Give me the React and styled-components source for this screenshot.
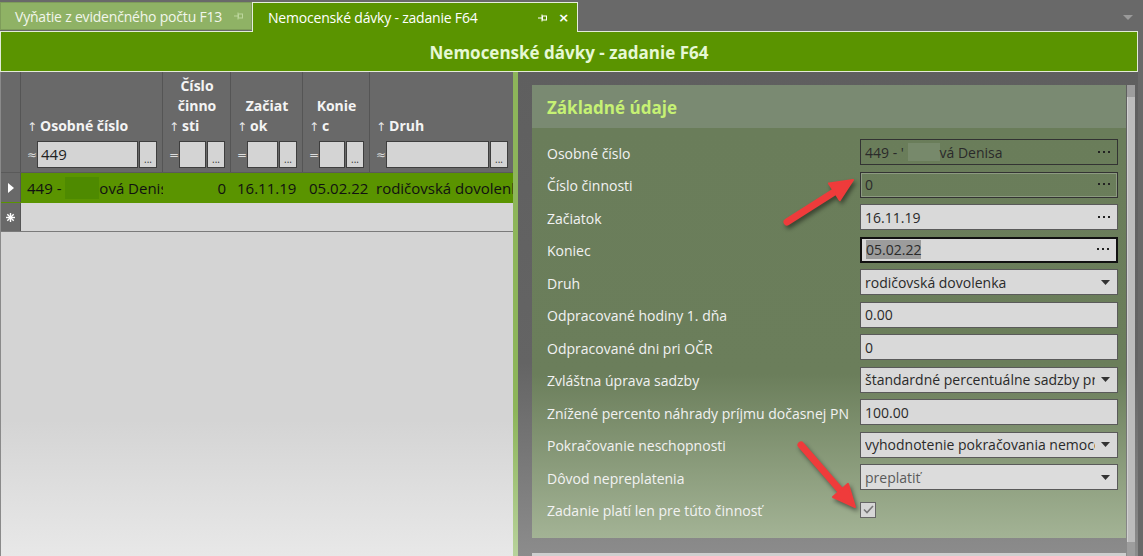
import styled, { createGlobalStyle } from 'styled-components';

const GlobalStyle = createGlobalStyle`
  body {
    margin: 0;
    background: #696969;
    font-family: "Open Sans", "Noto Sans", sans-serif;
  }
`

const Root = styled.div`
  width: 1143px;
  height: 556px;
  display: flex;
  flex-direction: column;
  background: #696969;
  overflow: hidden;
  position: relative;
  font-family: "Open Sans", "Noto Sans", sans-serif;
`

/* ---------- tab strip ---------- */
const TabStrip = styled.div`
  height: 31px;
  display: flex;
  align-items: flex-end;
  flex-shrink: 0;
`

const Tab = styled.div`
  position: relative;
  z-index: 2;
  display: flex;
  align-items: center;
  box-sizing: border-box;
  width: ${p => p.width}px;
  height: ${p => (p.active ? 30 : 28)}px;
  padding-left: ${p => (p.active ? 15 : 14)}px;
  padding-right: 8px;
  margin-bottom: ${p => (p.active ? -1 : 1)}px;
  font-size: 14px;
  letter-spacing: -0.2px;
  color: ${p => (p.active ? '#ffffff' : '#f2f6ec')};
  background: ${p => (p.active ? '#5a9400' : '#8fb265')};
  border: 1px solid ${p => (p.active ? '#e6efdc' : '#7e9c5a')};
  border-bottom: ${p => (p.active ? 'none' : '1px solid #7e9c5a')};
`

const TabLabel = styled.span`
  flex: 1;
  white-space: nowrap;
`

const TabIcons = styled.span`
  display: flex;
  align-items: center;
  gap: 11px;
`

const Close = styled.span`
  font-size: 13px;
  font-weight: 700;
  font-family: "DejaVu Sans", sans-serif;
  color: #ffffff;
`

const OverflowArrow = styled.div`
  margin-left: auto;
  align-self: center;
  margin-right: 10px;
  width: 0;
  height: 0;
  border-left: 5px solid transparent;
  border-right: 5px solid transparent;
  border-top: 5px solid #9a9a9a;
  margin-top: 3px;
`

/* ---------- document ---------- */
const Main = styled.div`
  flex: 1;
  display: flex;
  min-height: 0;
`

const Document = styled.div`
  width: 1138px;
  display: flex;
  flex-direction: column;
`

const TitleBar = styled.div`
  height: 41px;
  flex-shrink: 0;
  box-sizing: border-box;
  background: #5a9400;
  border: 1px solid #e3ecd8;
  display: flex;
  align-items: center;
  justify-content: center;
  font-size: 17px;
  font-weight: 700;
  color: #e6f8d4;
  padding-top: 1px;
`

const Body = styled.div`
  flex: 1;
  display: flex;
  min-height: 0;
`

/* ---------- grid ---------- */
const cols = '20px 142px 68px 72px 67px 1fr';

const Grid = styled.div`
  width: 513px;
  display: flex;
  flex-direction: column;
  border-left: 1px solid #8a8a8a;
  box-sizing: border-box;
`

const GridHeader = styled.div`
  height: 101px;
  display: grid;
  grid-template-columns: ${cols};
  background: #696969;
  border-bottom: 1px solid #5a5a5a;
  box-sizing: border-box;
`

const HeadCell = styled.div`
  display: flex;
  flex-direction: column;
  justify-content: flex-end;
  border-right: 1px solid #555555;
  padding: 0 5px 4px 6px;
  color: #f4f4f4;
  font-size: 14px;
  font-weight: 700;
  &:last-child { border-right: none; }
`

const HeadLine = styled.div`
  line-height: 20px;
  white-space: nowrap;
  text-align: ${p => (p.center ? 'center' : 'left')};
`

const SortArrow = styled.span`
  font-weight: 400;
  font-size: 12px;
  color: #e8e8e8;
  margin-right: 3px;
  font-family: "DejaVu Sans", sans-serif;
`

const FilterRow = styled.div`
  display: flex;
  align-items: center;
  height: 27px;
  margin-top: 4px;
`

const FilterSymbol = styled.span`
  width: 10px;
  flex-shrink: 0;
  font-size: 12px;
  font-weight: 400;
  color: #dddddd;
  font-family: "DejaVu Sans", sans-serif;
`

const FilterInput = styled.div`
  flex: 1;
  min-width: 0;
  height: 27px;
  box-sizing: border-box;
  background: #d4d4d4;
  border: 1px solid #3e3e3e;
  color: #222;
  font-size: 15px;
  font-weight: 400;
  padding-left: 3px;
  line-height: 24px;
`

const FilterButton = styled.div`
  width: 18px;
  height: 27px;
  box-sizing: border-box;
  margin-left: 1px;
  background: #d4d4d4;
  border: 1px solid #3e3e3e;
  color: #333;
  font-size: 10px;
  font-weight: 400;
  display: flex;
  align-items: flex-end;
  justify-content: center;
  padding-bottom: 3px;
  line-height: 1;
`

const DataRow = styled.div`
  height: ${p => p.h}px;
  display: grid;
  grid-template-columns: ${cols};
  background: ${p => p.bg};
  border-bottom: 1px solid ${p => p.line};
  box-sizing: border-box;
  flex-shrink: 0;
`

const Indicator = styled.div`
  background: #696969;
  display: flex;
  align-items: center;
  justify-content: center;
  color: #ffffff;
  border-right: 1px solid #555;
`

const Cell = styled.div`
  display: flex;
  align-items: center;
  justify-content: ${p => (p.right ? 'flex-end' : 'flex-start')};
  padding: 0 ${p => (p.right ? 5 : 6)}px;
  font-size: 15px;
  color: #111;
  white-space: nowrap;
  overflow: hidden;
`

const Blur = styled.span`
  display: inline-block;
  flex-shrink: 0;
  width: ${p => p.w}px;
  height: ${p => p.h}px;
  background: ${p => p.color};
  vertical-align: middle;
`

const GridFiller = styled.div`
  flex: 1;
  background: linear-gradient(#d4d4d4 0%, #d4d4d4 58%, #e8e8e8 100%);
`

const Splitter = styled.div`
  width: 5px;
  background: linear-gradient(#8db55a 0%, #8db55a 70%, #b8d29c 100%);
`

/* ---------- form ---------- */
const FormArea = styled.div`
  flex: 1;
  display: flex;
  padding: 13px 3px 0 14px;
  background: linear-gradient(#5f5f5f 0%, #646464 60%, #8c8c8c 100%);
`

const FormScroll = styled.div`
  flex: 1;
  display: flex;
  flex-direction: column;
  gap: 15px;
`

const Panel = styled.section`
  display: flex;
  flex-direction: column;
`

const PanelHeader = styled.div`
  height: 43px;
  background: #7a8a72;
  display: flex;
  align-items: center;
  padding-left: 15px;
  padding-top: 2px;
  box-sizing: border-box;
  font-size: 17px;
  font-weight: 700;
  color: #c6f174;
`

const PanelBody = styled.div`
  display: grid;
  grid-template-columns: 313px 1fr;
  grid-auto-rows: 26px;
  row-gap: 6.5px;
  padding: 11px 8px 15px 15px;
  background: linear-gradient(#6a7d5a 0%, #6b7e5b 60%, #a3b395 100%);
`

const Label = styled.div`
  display: flex;
  align-items: center;
  padding-top: 2px;
  font-size: 14px;
  color: #f2f2f2;
  white-space: nowrap;
`

const Field = styled.div`
  display: flex;
  align-items: center;
  gap: 6px;
  box-sizing: border-box;
  height: 26px;
  padding: 0 7px 0 4px;
  font-size: 14px;
  color: ${p => (p.muted ? '#5a5a5a' : '#2a2a2a')};
  background: ${p => (p.readOnly ? 'transparent' : p.muted ? '#dcdcdc' : '#d9d9d9')};
  border: ${p => (p.focused ? '2px solid #111' : `1px solid ${p.readOnly ? '#333' : '#5a5a5a'}`)};
  box-shadow: ${p => (p.inset ? 'inset 0 0 0 1px #8c9a80' : 'none')};
  overflow: hidden;
`

const FieldText = styled.span`
  flex: 1;
  min-width: 0;
  display: flex;
  align-items: center;
  white-space: nowrap;
  overflow: hidden;
`

const Selected = styled.span`
  background: #9c9c9c;
`

const NextPanel = styled.div`
  flex: 1;
  background: #cfcfcf;
`

const CheckBox = styled.div`
  width: 16px;
  height: 16px;
  box-sizing: border-box;
  align-self: center;
  background: #d6d6d6;
  border: 1px solid #666;
  display: flex;
  align-items: center;
  justify-content: center;
`

const ScrollTrack = styled.div`
  width: 8px;
  margin-left: 1px;
  background: #9d9d9d;
  padding: 12px 0 14px;
  display: flex;
`

const ScrollThumb = styled.div`
  flex: 1;
  background: #bcbcbc;
  border-left: 1px solid #d0d0d0;
`

const Overlay = styled.svg`
  position: absolute;
  left: 0;
  top: 0;
  pointer-events: none;
  filter: drop-shadow(2px 3px 2px rgba(0, 0, 0, 0.45));
`

function Pin({ color }) {
  return (
    <svg width="9" height="8" viewBox="0 0 9 8">
      <line x1="0" y1="4" x2="4" y2="4" stroke={color} strokeWidth="1" />
      <rect x="3.5" y="0.5" width="1" height="7" fill={color} />
      <rect x="4.5" y="2" width="4" height="4" fill="none" stroke={color} strokeWidth="1" />
    </svg>
  );
}

function Dots() {
  return (
    <svg width="12" height="3" viewBox="0 0 12 3">
      <rect x="0" y="0" width="2" height="2" fill="#222" />
      <rect x="5" y="0" width="2" height="2" fill="#222" />
      <rect x="10" y="0" width="2" height="2" fill="#222" />
    </svg>
  );
}

function Caret() {
  return (
    <svg width="9" height="5" viewBox="0 0 9 5">
      <polygon points="0,0 9,0 4.5,5" fill="#333" />
    </svg>
  );
}

const headers = [
  { lines: [], last: 'Osobné číslo', sym: '≈', value: '449' },
  { lines: ['Číslo', 'činno'], last: 'sti', sym: '=' },
  { lines: ['Začiat'], last: 'ok', sym: '=' },
  { lines: ['Konie'], last: 'c', sym: '=' },
  { lines: [], last: 'Druh', sym: '≈' },
];

const fields = [
  { label: 'Osobné číslo', kind: 'person', readOnly: true },
  { label: 'Číslo činnosti', value: '0', kind: 'dots', readOnly: true, inset: true },
  { label: 'Začiatok', value: '16.11.19', kind: 'dots' },
  { label: 'Koniec', value: '05.02.22', kind: 'dots', focused: true },
  { label: 'Druh', value: 'rodičovská dovolenka', kind: 'select' },
  { label: 'Odpracované hodiny 1. dňa', value: '0.00' },
  { label: 'Odpracované dni pri OČR', value: '0' },
  { label: 'Zvláštna úprava sadzby', value: 'štandardné percentuálne sadzby pre', kind: 'select' },
  { label: 'Znížené percento náhrady príjmu dočasnej PN', value: '100.00' },
  { label: 'Pokračovanie neschopnosti', value: 'vyhodnotenie pokračovania nemocenského', kind: 'select' },
  { label: 'Dôvod nepreplatenia', value: 'preplatiť', kind: 'select', muted: true },
];

function FieldValue({ f }) {
  if (f.kind === 'person') {
    return (
      <>
        <FieldText>449 - '&nbsp;<Blur w={32} h={18} color="#77896b" />vá Denisa</FieldText>
        <Dots />
      </>
    );
  }
  return (
    <>
      <FieldText>{f.focused ? <Selected>{f.value}</Selected> : f.value}</FieldText>
      {f.kind === 'dots' && <Dots />}
      {f.kind === 'select' && <Caret />}
    </>
  );
}

export default function App() {
  return (
    <Root>
      <GlobalStyle />
      <TabStrip>
        <Tab width={252}>
          <TabLabel>Vyňatie z evidenčného počtu F13</TabLabel>
          <TabIcons><Pin color="#bcd69c" /></TabIcons>
        </Tab>
        <Tab active width={326}>
          <TabLabel>Nemocenské dávky - zadanie F64</TabLabel>
          <TabIcons><Pin color="#ffffff" /><Close>×</Close></TabIcons>
        </Tab>
        <OverflowArrow />
      </TabStrip>

      <Main>
        <Document>
          <TitleBar>Nemocenské dávky - zadanie F64</TitleBar>
          <Body>
            <Grid>
              <GridHeader>
                <HeadCell />
                {headers.map(h => (
                  <HeadCell key={h.last}>
                    {h.lines.map(l => <HeadLine center key={l}>{l}</HeadLine>)}
                    <HeadLine><SortArrow>↑</SortArrow>{h.last}</HeadLine>
                    <FilterRow>
                      <FilterSymbol>{h.sym}</FilterSymbol>
                      <FilterInput>{h.value}</FilterInput>
                      <FilterButton>...</FilterButton>
                    </FilterRow>
                  </HeadCell>
                ))}
              </GridHeader>
              <DataRow h={30} bg="#5a9400" line="#5a9400">
                <Indicator>
                  <svg width="6" height="10" viewBox="0 0 6 10"><polygon points="0,0 6,5 0,10" fill="#fff" /></svg>
                </Indicator>
                <Cell>449 -&nbsp;<Blur w={34} h={22} color="#4e8a00" />ová Denisa</Cell>
                <Cell right>0</Cell>
                <Cell>16.11.19</Cell>
                <Cell>05.02.22</Cell>
                <Cell>rodičovská dovolenka</Cell>
              </DataRow>
              <DataRow h={29} bg="#d6d6d6" line="#7a7a7a">
                <Indicator>
                  <svg width="9" height="9" viewBox="0 0 9 9">
                    <g stroke="#fff" strokeWidth="1.4">
                      <line x1="4.5" y1="0" x2="4.5" y2="9" />
                      <line x1="0" y1="4.5" x2="9" y2="4.5" />
                      <line x1="1.3" y1="1.3" x2="7.7" y2="7.7" />
                      <line x1="7.7" y1="1.3" x2="1.3" y2="7.7" />
                    </g>
                  </svg>
                </Indicator>
              </DataRow>
              <GridFiller />
            </Grid>
            <Splitter />
            <FormArea>
              <FormScroll>
                <Panel>
                  <PanelHeader>Základné údaje</PanelHeader>
                  <PanelBody>
                    {fields.map(f => [
                      <Label key={f.label + '-l'}>{f.label}</Label>,
                      <Field key={f.label + '-f'} readOnly={f.readOnly} inset={f.inset} focused={f.focused} muted={f.muted}>
                        <FieldValue f={f} />
                      </Field>,
                    ])}
                    <Label>Zadanie platí len pre túto činnosť</Label>
                    <CheckBox>
                      <svg width="11" height="9" viewBox="0 0 11 9">
                        <polyline points="1,4.5 4,7.5 10,1" fill="none" stroke="#777" strokeWidth="1.6" />
                      </svg>
                    </CheckBox>
                  </PanelBody>
                </Panel>
                <NextPanel />
              </FormScroll>
              <ScrollTrack><ScrollThumb /></ScrollTrack>
            </FormArea>
          </Body>
        </Document>
      </Main>

      <Overlay width="1143" height="556" viewBox="0 0 1143 556">
        <g fill="#ef3b3b" stroke="#ef3b3b" strokeLinecap="round" strokeLinejoin="round">
          <line x1="787" y1="222" x2="835" y2="191.5" strokeWidth="7" />
          <polygon points="853,180 839.8,200.2 829,183.4" strokeWidth="2" />
          <line x1="801" y1="445" x2="840" y2="490" strokeWidth="7" />
          <polygon points="855,507 833,497 848,483.8" strokeWidth="2" />
        </g>
      </Overlay>
    </Root>
  );
}
